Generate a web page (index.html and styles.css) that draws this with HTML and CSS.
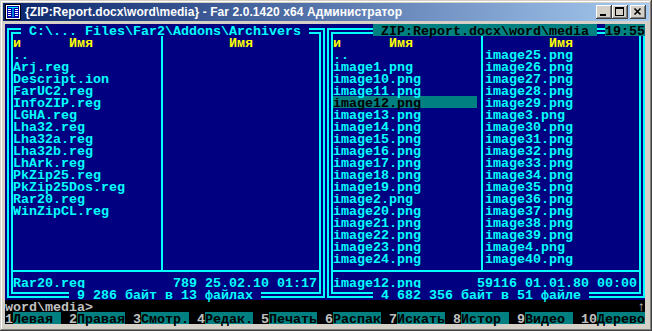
FILE: index.html
```html
<!DOCTYPE html>
<html lang="ru">
<head>
<meta charset="UTF-8">
<meta name="viewport" content="width=device-width, initial-scale=1.0">
<title>Far 2.0.1420 x64</title>
<link rel="stylesheet" href="styles.css">
</head>
<body>
<div class="window">
    <div class="titlebar">
        <svg class="app-icon" width="16" height="16" viewBox="0 0 16 16">
            <rect x="0.5" y="0.5" width="15" height="15" fill="#c0c0c0" stroke="#000"/>
            <rect x="1.5" y="1.5" width="13" height="13" fill="#0000a8" stroke="#fff"/>
            <rect x="3" y="3" width="10" height="1" fill="#00ffff"/>
            <rect x="7.5" y="3" width="1" height="10" fill="#00ffff"/>
            <rect x="3" y="5" width="3" height="1" fill="#fff"/>
            <rect x="3" y="7" width="3" height="1" fill="#fff"/>
            <rect x="3" y="9" width="3" height="1" fill="#fff"/>
            <rect x="3" y="11" width="3" height="1" fill="#fff"/>
            <rect x="10" y="5" width="3" height="1" fill="#fff"/>
            <rect x="10" y="7" width="3" height="1" fill="#fff"/>
            <rect x="10" y="9" width="3" height="1" fill="#fff"/>
            <rect x="10" y="11" width="3" height="1" fill="#fff"/>
        </svg>
        <span class="caption">{ZIP:Report.docx\word\media} - Far 2.0.1420 x64 Администратор</span>
        <div class="buttons">
            <span class="btn"><svg width="16" height="14" viewBox="0 0 16 14"><rect x="4" y="9" width="6" height="2" fill="#000"/></svg></span>
            <span class="btn"><svg width="16" height="14" viewBox="0 0 16 14"><rect x="3.5" y="2.5" width="8" height="8" fill="none" stroke="#000"/><rect x="3" y="2" width="9" height="2" fill="#000"/></svg></span>
            <span class="btn btn-close"><svg width="16" height="14" viewBox="0 0 16 14"><path d="M4.5 3.5 L10.5 9.5 M10.5 3.5 L4.5 9.5" stroke="#000" stroke-width="1.6"/></svg></span>
        </div>
    </div>

    <div class="console">
        <div class="panels">
            <div class="panel panel-left">
                <div class="frame">
                    <div class="cols">
                        <div class="col">
                            <div class="head"><span class="sort">и</span>      Имя</div>
                            <div class="row">..</div>
                            <div class="row">Arj.reg</div>
                            <div class="row">Descript.ion</div>
                            <div class="row">FarUC2.reg</div>
                            <div class="row">InfoZIP.reg</div>
                            <div class="row">LGHA.reg</div>
                            <div class="row">Lha32.reg</div>
                            <div class="row">Lha32a.reg</div>
                            <div class="row">Lha32b.reg</div>
                            <div class="row">LhArk.reg</div>
                            <div class="row">PkZip25.reg</div>
                            <div class="row">PkZip25Dos.reg</div>
                            <div class="row">Rar20.reg</div>
                            <div class="row">WinZipCL.reg</div>
                        </div>
                        <div class="col">
                            <div class="head">        Имя</div>
                        </div>
                    </div>
                    <div class="status"><span>Rar20.reg</span><span>789 25.02.10 01:17</span></div>
                </div>
                <span class="title"> C:\... Files\Far2\Addons\Archivers </span>
                <span class="total"> 9 286 байт в 13 файлах </span>
            </div>

            <div class="panel panel-right">
                <div class="frame">
                    <div class="cols">
                        <div class="col">
                            <div class="head"><span class="sort">и</span>      Имя</div>
                            <div class="row">..</div>
                            <div class="row">image1.png</div>
                            <div class="row">image10.png</div>
                            <div class="row">image11.png</div>
                            <div class="row sel">image12.png</div>
                            <div class="row">image13.png</div>
                            <div class="row">image14.png</div>
                            <div class="row">image15.png</div>
                            <div class="row">image16.png</div>
                            <div class="row">image17.png</div>
                            <div class="row">image18.png</div>
                            <div class="row">image19.png</div>
                            <div class="row">image2.png</div>
                            <div class="row">image20.png</div>
                            <div class="row">image21.png</div>
                            <div class="row">image22.png</div>
                            <div class="row">image23.png</div>
                            <div class="row">image24.png</div>
                        </div>
                        <div class="col">
                            <div class="head">        Имя</div>
                            <div class="row">image25.png</div>
                            <div class="row">image26.png</div>
                            <div class="row">image27.png</div>
                            <div class="row">image28.png</div>
                            <div class="row">image29.png</div>
                            <div class="row">image3.png</div>
                            <div class="row">image30.png</div>
                            <div class="row">image31.png</div>
                            <div class="row">image32.png</div>
                            <div class="row">image33.png</div>
                            <div class="row">image34.png</div>
                            <div class="row">image35.png</div>
                            <div class="row">image36.png</div>
                            <div class="row">image37.png</div>
                            <div class="row">image38.png</div>
                            <div class="row">image39.png</div>
                            <div class="row">image4.png</div>
                            <div class="row">image40.png</div>
                        </div>
                    </div>
                    <div class="status"><span>image12.png</span><span>59116 01.01.80 00:00</span></div>
                </div>
                <span class="title active"> ZIP:Report.docx\word\media </span>
                <span class="clock">19:55</span>
                <span class="total"> 4 682 356 байт в 51 файле </span>
            </div>
        </div>

        <div class="cmdline"><span>word\media&gt;_</span><span>↑</span></div>

        <div class="keybar">
            <div class="key"><span class="num">1</span><span class="label">Левая</span></div>
            <div class="key"><span class="num">2</span><span class="label">Правая</span></div>
            <div class="key"><span class="num">3</span><span class="label">Смотр.</span></div>
            <div class="key"><span class="num">4</span><span class="label">Редак.</span></div>
            <div class="key"><span class="num">5</span><span class="label">Печать</span></div>
            <div class="key"><span class="num">6</span><span class="label">Распак</span></div>
            <div class="key"><span class="num">7</span><span class="label">Искать</span></div>
            <div class="key"><span class="num">8</span><span class="label">Истор</span></div>
            <div class="key"><span class="num">9</span><span class="label">Видео</span></div>
            <div class="key"><span class="num">10</span><span class="label">Дерево</span></div>
        </div>
    </div>
</div>
</body>
</html>
```

FILE: styles.css
```css
body {
    margin: 0;
    background: #d4d0c8;
}

.window {
    width: 652px;
    height: 331px;
    box-sizing: border-box;
    padding: 3px;
    background: #d4d0c8;
    box-shadow: inset -1px -1px #404040, inset 1px 1px #d4d0c8,
                inset -2px -2px #808080, inset 2px 2px #ffffff;
}

/* title bar */

.titlebar {
    display: flex;
    align-items: center;
    height: 18px;
    padding: 0 3px 0 2px;
    background: linear-gradient(to right, #0a246a, #a6caf0);
    color: #fff;
    font-family: 'Liberation Sans', Arial, sans-serif;
    font-weight: bold;
    font-size: 12px;
    letter-spacing: 0.08px;
}

.app-icon {
    display: block;
    flex: none;
}

.caption {
    margin-left: 4px;
    white-space: nowrap;
}

.buttons {
    display: flex;
    margin-left: auto;
}

.btn {
    display: block;
    width: 16px;
    height: 14px;
    background: #d4d0c8;
    box-shadow: inset -1px -1px #404040, inset 1px 1px #ffffff,
                inset -2px -2px #808080, inset 2px 2px #d4d0c8;
}

.btn svg {
    display: block;
}

.btn-close {
    margin-left: 2px;
}

/* console: 80 x 25 cells of 8 x 12 px, text sits low in its cell */

.console {
    width: 640px;
    height: 300px;
    margin: 3px 4px 0 2px;
    background: #000;
    color: #00ffff;
    font-family: 'Liberation Mono', 'DejaVu Sans Mono', monospace;
    font-weight: bold;
    font-size: 13.333px;
    line-height: 16px;
    white-space: nowrap;
}

.panels {
    display: flex;
}

.panel {
    position: relative;
    width: 320px;
    height: 276px;
    background: #000080;
}

.frame {
    width: 318px;
    height: 270px;
    box-sizing: border-box;
    margin: 4px 0 2px 2px;
    padding-top: 2px;
    border: 6px double #00ffff;
}

.cols {
    display: flex;
    height: 234px;
}

.col {
    width: 144px;
    padding-right: 4px;
    border-right: 2px solid #00ffff;
}

.col + .col {
    flex: 1;
    padding: 0 0 0 2px;
    border-right: none;
}

.head {
    height: 12px;
    color: #ffff00;
    white-space: pre;
}

.row {
    height: 12px;
}

.row.sel {
    background: #008080;
    color: #000;
}

.status {
    display: flex;
    justify-content: space-between;
    height: 12px;
    padding: 4px 2px 0 0;
    border-top: 2px solid #00ffff;
}

.title, .total, .clock {
    position: absolute;
    height: 12px;
    background: #000080;
    white-space: pre;
}

.title {
    top: 0;
}

.title.active {
    background: #008080;
    color: #000;
}

.total {
    top: 264px;
}

.panel-left .title { left: 16px; }
.panel-left .total { left: 64px; }
.panel-right .title { left: 48px; }
.panel-right .total { left: 48px; }

.clock {
    top: 0;
    right: 0;
    width: 40px;
    background: #008080;
    color: #000;
}

.cmdline {
    display: flex;
    justify-content: space-between;
    height: 12px;
    color: #c0c0c0;
}

.keybar {
    display: flex;
    height: 12px;
}

.key {
    display: flex;
    width: 64px;
}

.num {
    color: #c0c0c0;
}

.label {
    width: 48px;
    background: #008080;
    color: #000;
}
```
